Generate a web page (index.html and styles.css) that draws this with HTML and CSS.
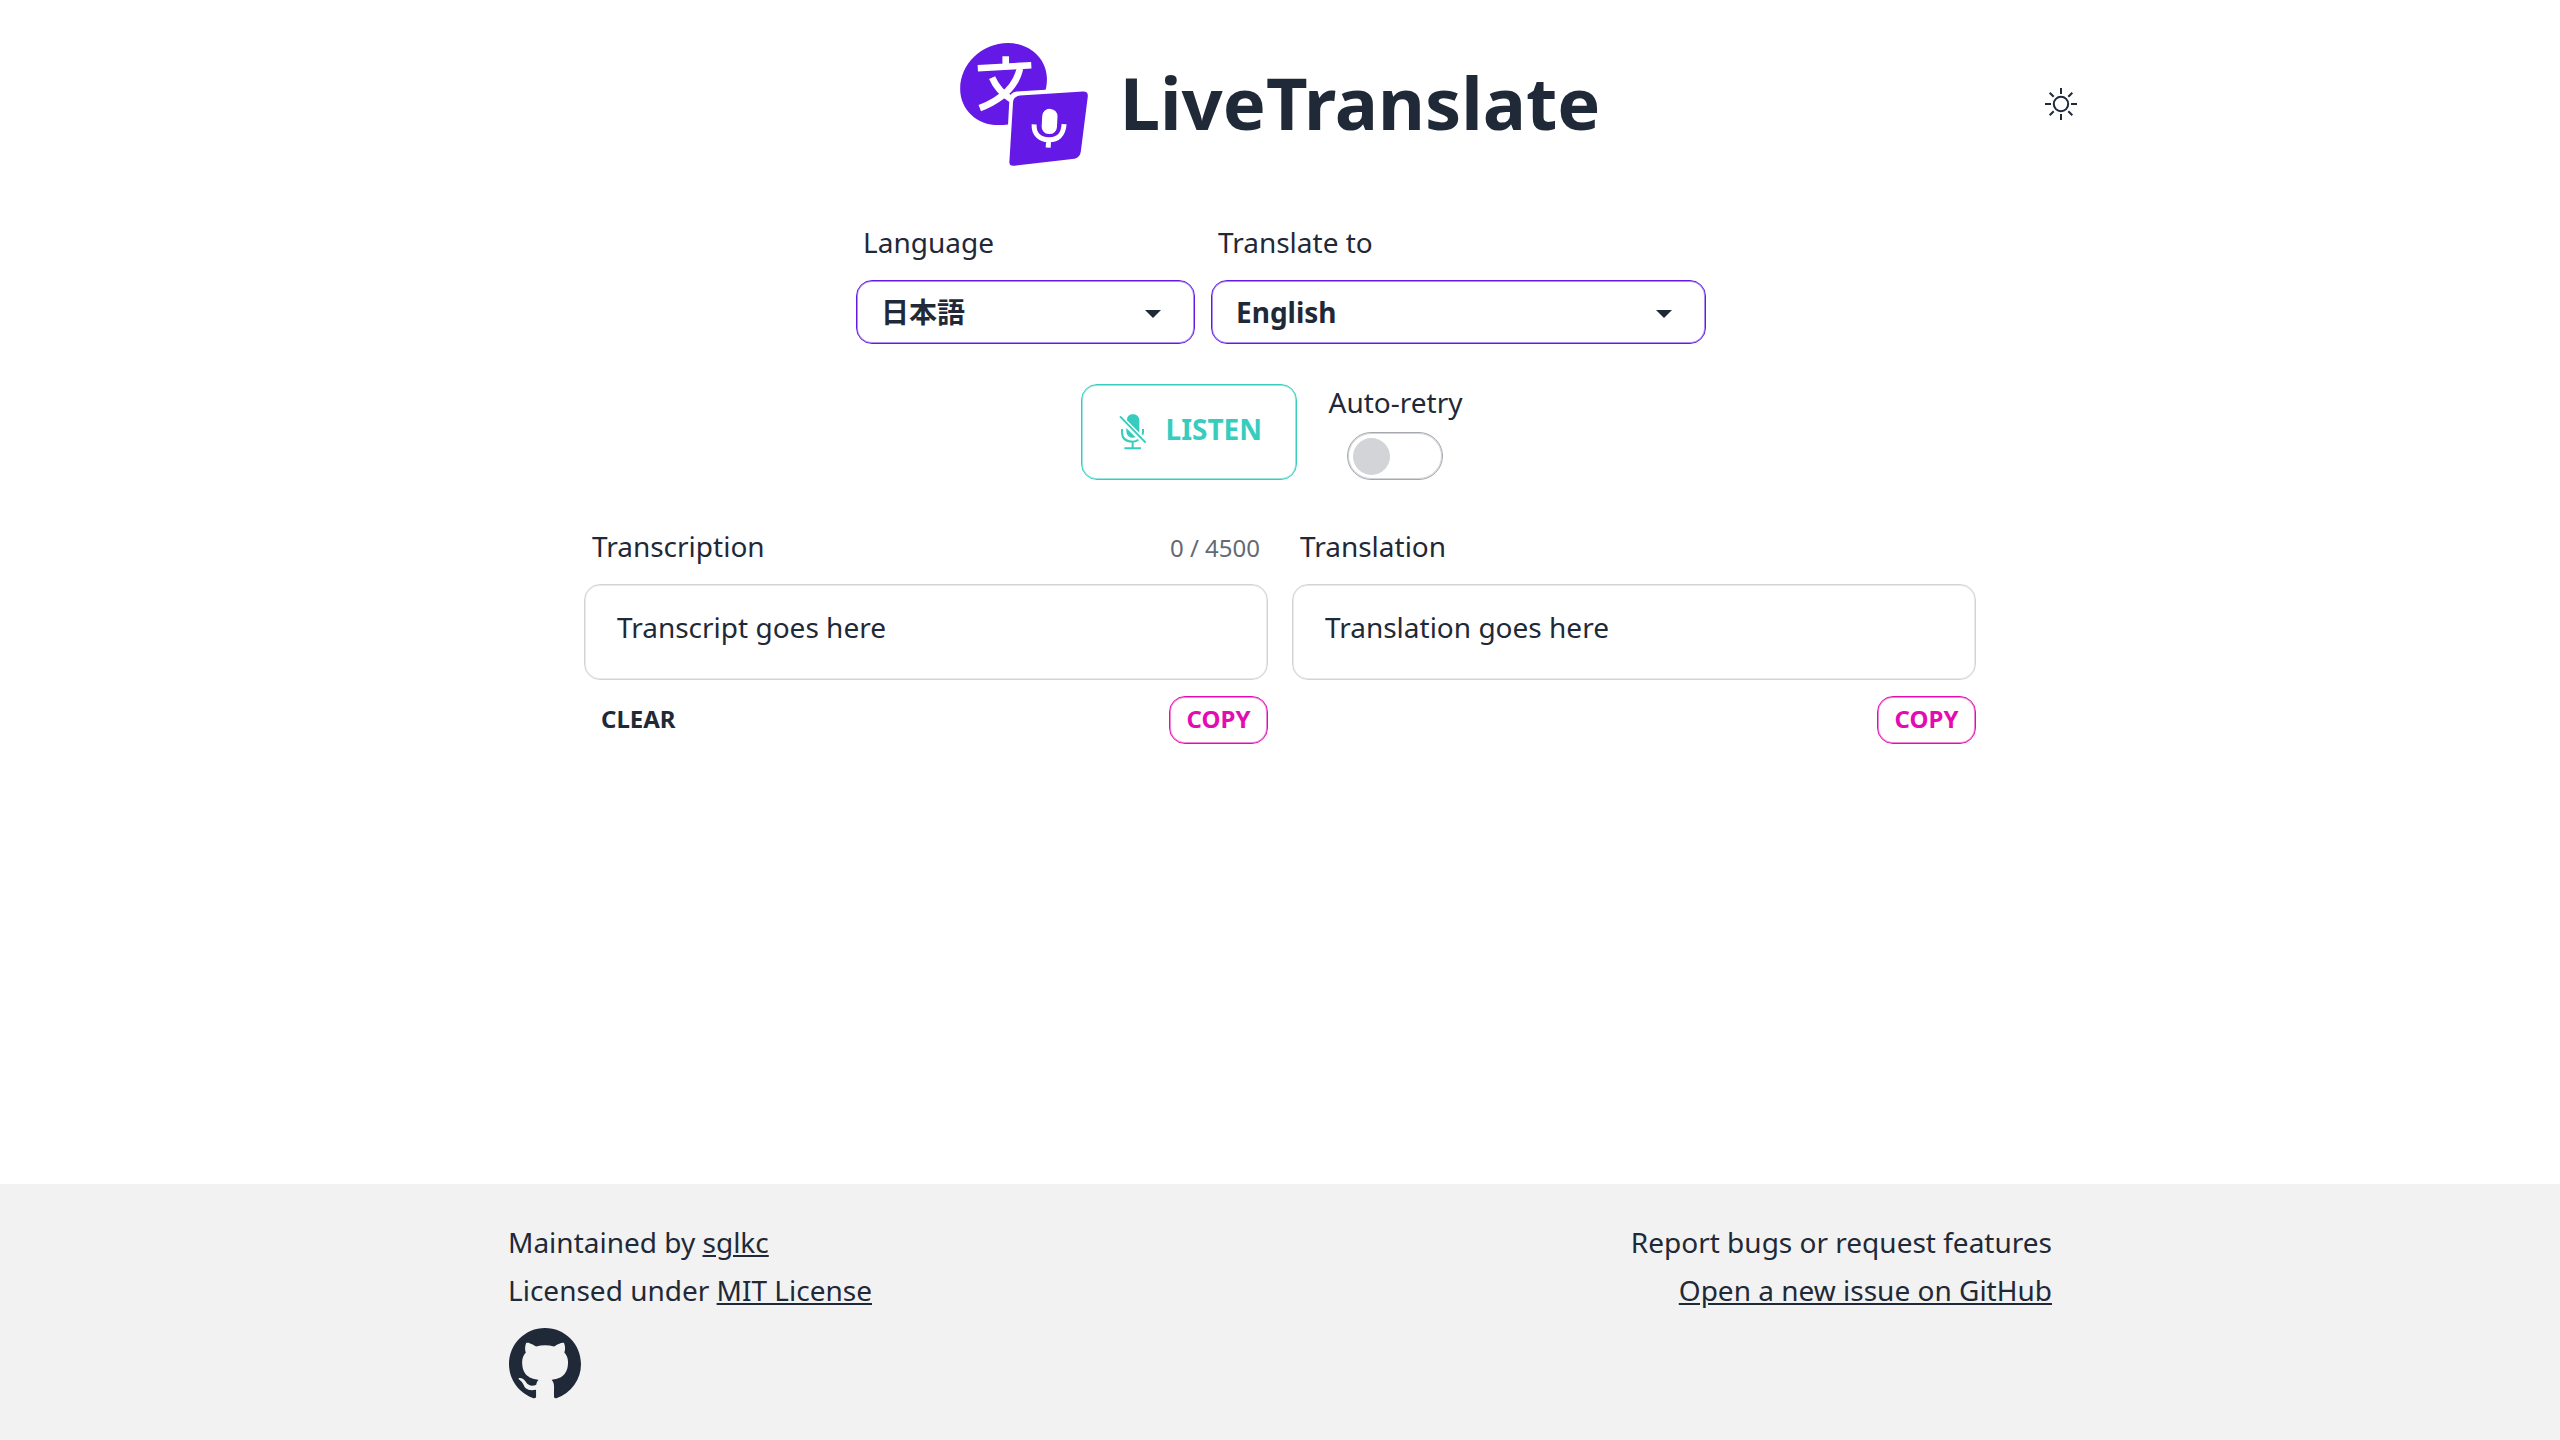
FILE: index.html
```html
<!DOCTYPE html>
<html lang="en">
<head>
<meta charset="utf-8">
<title>LiveTranslate</title>
<link rel="stylesheet" href="styles.css">
</head>
<body>
<header class="header">
  <div class="brand">
    <svg class="logo" viewBox="60 36 384 370" aria-hidden="true">
      <path fill="#6419e6" d="M204 36C268 36 320 82 321 142C321 155 320 166 317 177L230 182Q210 183 208 207L204 281Q190 283 176 283C110 283 60 236 60 174C60 100 124 36 204 36Z"/>
      <g fill="none" stroke="#fff" stroke-width="20">
        <path d="M197 76V104M113 112L274 103M241 107Q226 190 119 232M156 140Q174 181 213 205"/>
      </g>
      <path fill="#6419e6" d="M240 194L430 182Q445 182 444 196L423 362Q421 381 404 384L224 405Q207 407 208 393L219 214Q220 196 240 194Z"/>
      <g transform="rotate(3 327 290)">
        <rect x="305" y="234" width="46" height="76" rx="22" fill="#fff"/>
        <path d="M282 283C282 313 302 327 328 327S372 310 372 278M328 327V351" fill="none" stroke="#fff" stroke-width="15"/>
      </g>
    </svg>
    <h1 class="title">LiveTranslate</h1>
  </div>
  <button class="theme" aria-label="Theme">
    <svg viewBox="0 0 32 32" width="32" height="32" fill="none" stroke="#1f2937" stroke-width="2">
      <circle cx="16" cy="16" r="7.2"/>
      <path d="M16 0V6M16 26V32M0 16H6M26 16H32M4.7 4.7L8.7 8.7M23.3 23.3L27.3 27.3M4.7 27.3L8.7 23.3M23.3 8.7L27.3 4.7"/>
    </svg>
  </button>
</header>
<main class="main">
  <div class="languages">
    <div class="field source">
      <span class="label">Language</span>
      <button class="select"><span>日本語</span><svg class="caret" viewBox="0 0 16 8"><path d="M0 0H16L8 8Z"/></svg></button>
    </div>
    <div class="field target">
      <span class="label">Translate to</span>
      <button class="select"><span>English</span><svg class="caret" viewBox="0 0 16 8"><path d="M0 0H16L8 8Z"/></svg></button>
    </div>
  </div>
  <div class="controls">
    <button class="listen">
      <svg class="mic" viewBox="0 0 84 108" aria-hidden="true">
        <path fill="#37cdbe" d="M24 17C25 5 32 1 42 1C54 1 61 8 61 20V56L24 19ZM22 42L50 70Q44 72 39 71C29 70 22 62 22 51Z"/>
        <path fill="none" stroke="#37cdbe" stroke-width="6" d="M3 7L80 86M9 45V54C9 73 21 83 41 83Q52 83 58 77M72 45V54Q72 59 70 62M41 83V102M16 103H66"/>
      </svg>
      <span>LISTEN</span>
    </button>
    <div class="retry">
      <span>Auto-retry</span>
      <button class="toggle" aria-label="Auto-retry"><span class="knob"></span></button>
    </div>
  </div>
  <div class="panels">
    <section>
      <div class="panel-head"><span>Transcription</span><span class="count">0 / 4500</span></div>
      <div class="text">Transcript goes here</div>
      <div class="actions"><button class="small clear">CLEAR</button><button class="small copy">COPY</button></div>
    </section>
    <section>
      <div class="panel-head"><span>Translation</span></div>
      <div class="text">Translation goes here</div>
      <div class="actions end"><button class="small copy">COPY</button></div>
    </section>
  </div>
</main>
<footer class="footer">
  <div>
    <p>Maintained by <a href="#">sglkc</a></p>
    <p>Licensed under <a href="#">MIT License</a></p>
    <svg class="github" viewBox="0 0 16 16" aria-hidden="true"><path fill="#1f2937" d="M8 0C3.58 0 0 3.58 0 8c0 3.54 2.29 6.53 5.47 7.59.4.07.55-.17.55-.38 0-.19-.01-.82-.01-1.49-2.01.37-2.53-.49-2.69-.94-.09-.23-.48-.94-.82-1.13-.28-.15-.68-.52-.01-.53.63-.01 1.08.58 1.23.82.72 1.21 1.87.87 2.33.66.07-.52.28-.87.51-1.07-1.78-.2-3.64-.89-3.64-3.95 0-.87.31-1.59.82-2.15-.08-.2-.36-1.02.08-2.12 0 0 .67-.21 2.2.82.64-.18 1.32-.27 2-.27s1.36.09 2 .27c1.53-1.04 2.2-.82 2.2-.82.44 1.1.16 1.92.08 2.12.51.56.82 1.27.82 2.15 0 3.07-1.87 3.75-3.65 3.95.29.25.54.73.54 1.48 0 1.07-.01 1.93-.01 2.2 0 .21.15.46.55.38A8.01 8.01 0 0 0 16 8c0-4.42-3.58-8-8-8Z"/></svg>
  </div>
  <div class="report">
    <p>Report bugs or request features</p>
    <p><a href="#">Open a new issue on GitHub</a></p>
  </div>
</footer>
</body>
</html>
```
FILE: styles.css
```css
* { box-sizing: border-box; }
body {
  margin: 0;
  min-height: 1440px;
  display: flex;
  flex-direction: column;
  background: #fff;
  color: #1f2937;
  font: 28px/40px "Noto Sans", "Noto Sans CJK JP", sans-serif;
}
button {
  padding: 0;
  border: 0;
  background: none;
  color: inherit;
  font: inherit;
}
svg { display: block; flex: none; }
a { color: inherit; }
p { margin: 0; }

.header {
  width: 1600px;
  height: 208px;
  margin: 0 auto;
  display: grid;
  grid-template-columns: 1fr auto 1fr;
}
.brand {
  grid-column: 2;
  height: 124px;
  margin-top: 42px;
  display: flex;
  align-items: center;
  gap: 32px;
}
.logo { width: 128px; height: 123px; }
.title { margin: 0 0 4px; font-size: 72.2px; line-height: 80px; font-weight: 700; }
.theme { justify-self: end; align-self: start; margin: 88px 3px 0 0; }

.main { flex: 1; display: flex; flex-direction: column; align-items: center; }
.languages { padding-left: 2px; display: flex; gap: 16px; }
.source { width: 339px; }
.target { width: 495px; }
.label { display: block; height: 72px; padding: 14px 7px; }
.select {
  width: 100%;
  height: 64px;
  padding: 0 33px 0 24px;
  display: flex;
  align-items: center;
  justify-content: space-between;
  border: 1px solid #6419e6;
  box-shadow: inset 0 0 0 1px #6419e680;
  border-radius: 16px;
  font-weight: 700;
}
.caret { width: 16px; height: 8px; margin-top: 4px; fill: #1f2937; }

.controls { height: 96px; margin: 40px 16px 0 0; display: flex; gap: 31px; }
.listen {
  width: 216px;
  height: 96px;
  padding: 0 34px 6px 37px;
  display: flex;
  align-items: center;
  gap: 18px;
  border: 1px solid #37cdbe;
  box-shadow: inset 0 0 0 1px #37cdbe80;
  border-radius: 16px;
  color: #37cdbe;
  font-weight: 700;
}
.mic { width: 28px; height: 36px; margin-top: 5px; }
.retry { display: flex; flex-direction: column; align-items: center; justify-content: space-between; line-height: 36px; }
.toggle {
  width: 96px;
  height: 48px;
  padding: 5px;
  border: 1px solid #a5a9af;
  box-shadow: inset 0 0 0 1px #a5a9af80;
  border-radius: 24px;
}
.knob { display: block; width: 37px; height: 37px; border-radius: 50%; background: #d2d4d7; }

.panels {
  width: 1392px;
  margin-top: 32px;
  display: grid;
  grid-template-columns: 1fr 1fr;
  gap: 24px;
}
.panel-head { height: 72px; padding: 14px 8px; display: flex; justify-content: space-between; align-items: baseline; }
.count { color: #626a75; font-size: 24px; }
.text {
  height: 96px;
  padding: 22px 32px;
  border: 1px solid #d2d4d7;
  box-shadow: inset 0 0 0 1px #d2d4d780;
  border-radius: 16px;
}
.actions { margin-top: 16px; display: flex; justify-content: space-between; }
.end { justify-content: flex-end; }
.small { height: 48px; padding: 0 16px 2px; font-size: 24px; line-height: 40px; font-weight: 700; }
.clear { padding-left: 17px; }
.copy {
  width: 99px;
  border: 1px solid #e40cb1;
  box-shadow: inset 0 0 0 1px #e40cb180;
  border-radius: 16px;
  color: #e40cb1;
}

.footer {
  height: 256px;
  padding: 34px 508px;
  display: flex;
  justify-content: space-between;
  background: #f2f2f2;
  line-height: 48px;
}
.report { text-align: right; }
.github { width: 72px; height: 72px; margin: 14px 0 0 1px; }
```
